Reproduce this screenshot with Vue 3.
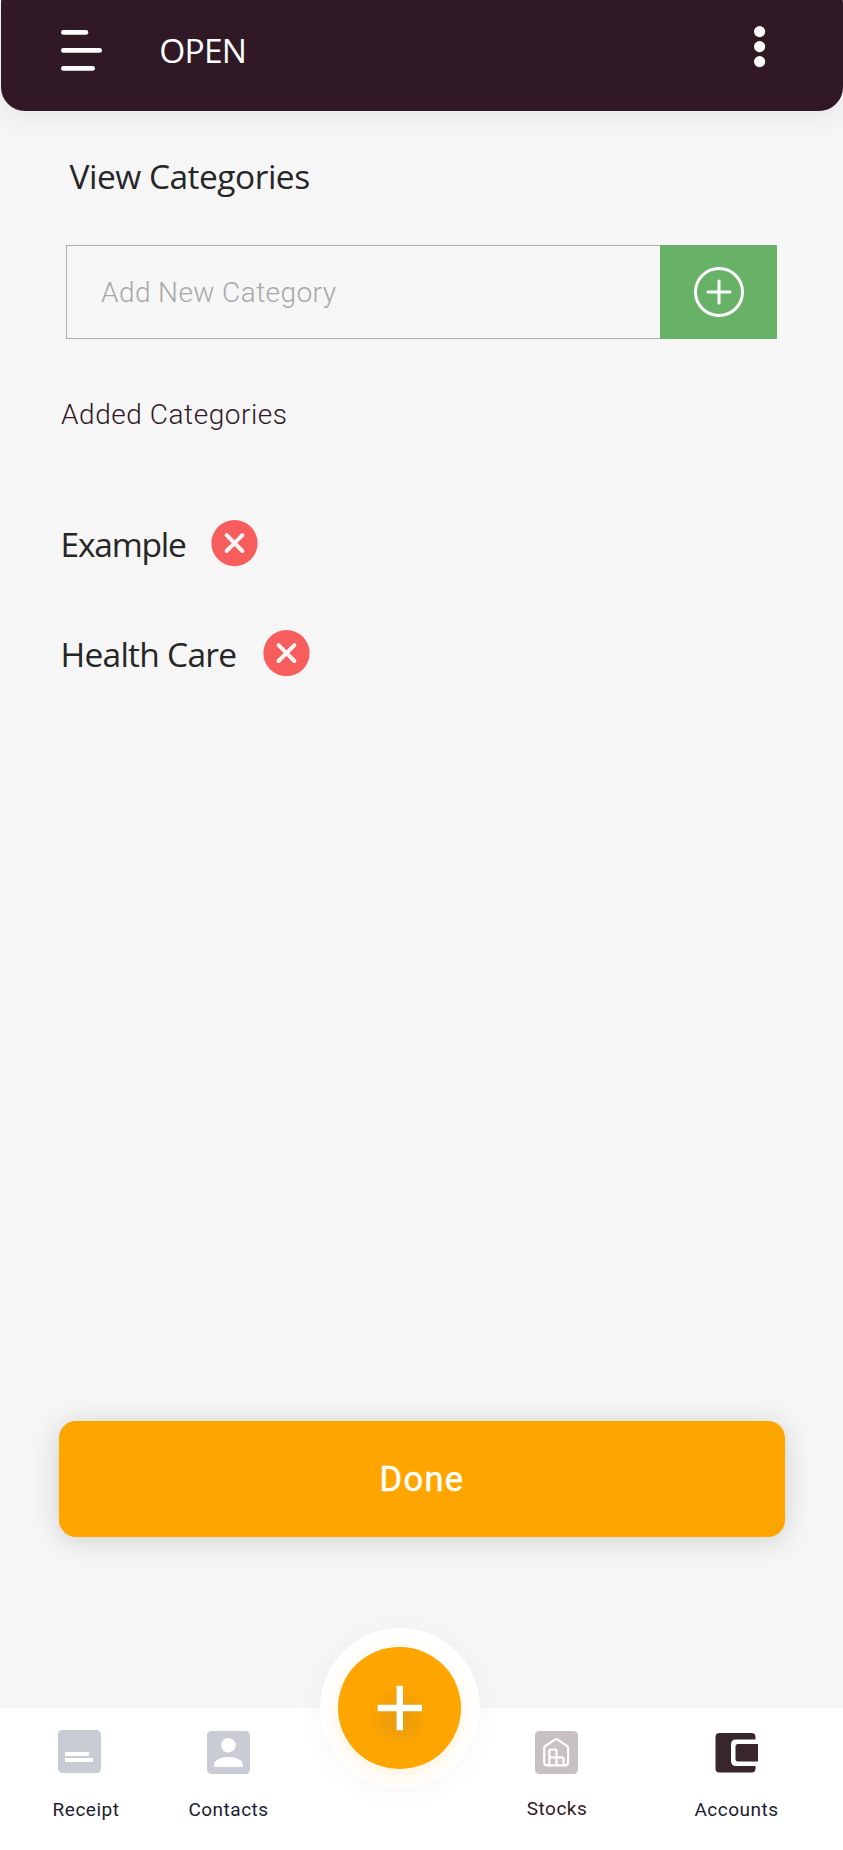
<script setup>
const categories = [
  { name: 'Example', key: 'example' },
  { name: 'Health Care', key: 'health' },
]
</script>

<template>
  <div class="screen">
    <header class="topbar">
      <svg class="menu" width="42" height="42" viewBox="0 0 42 42">
        <g fill="#fff">
          <rect x="0" y="0" width="27.3" height="4.8" rx="2.4" />
          <rect x="0" y="18" width="41" height="4.8" rx="2.4" />
          <rect x="0" y="36" width="34" height="4.8" rx="2.4" />
        </g>
      </svg>
      <span class="brand">OPEN</span>
      <svg class="more" width="12" height="42" viewBox="0 0 12 42" fill="#fff">
        <circle cx="5.6" cy="5.6" r="5.6" />
        <circle cx="5.6" cy="20.6" r="5.6" />
        <circle cx="5.6" cy="35.6" r="5.6" />
      </svg>
    </header>

    <main class="content">
      <h1 class="title"><span>View Categories</span></h1>
      <div class="field">
        <div class="entry"><span>Add New Category</span></div>
        <button class="add">
          <svg width="50" height="50" viewBox="0 0 50 50" fill="none" stroke="#fff">
            <circle cx="25" cy="25" r="23.5" stroke-width="3" />
            <path d="M14 25H36M25 14V36" stroke-width="3" stroke-linecap="round" />
          </svg>
        </button>
      </div>
      <h2 class="subtitle"><span>Added Categories</span></h2>
      <ul class="list">
        <li v-for="c in categories" :key="c.key" :class="c.key">
          <span class="name">{{ c.name }}</span>
          <svg width="47" height="47" viewBox="0 0 47 47">
            <circle cx="23.5" cy="23.1" r="23.1" fill="#f75d5d" />
            <path d="M15.6 15.2L31.4 31M31.4 15.2L15.6 31" stroke="#f8f5f5" stroke-width="4" stroke-linecap="round" />
          </svg>
        </li>
      </ul>
      <button class="done"><span>Done</span></button>
    </main>

    <nav class="tabs">
      <div class="tab receipt">
        <svg width="43" height="43" viewBox="0 0 43 43">
          <rect width="43" height="43" rx="4.5" fill="#c9ccd4" />
          <path d="M7 22h24v4H7zM7 28h28v4H7z" fill="#fff" />
        </svg>
        <span>Receipt</span>
      </div>
      <div class="tab contacts">
        <svg width="43" height="43" viewBox="0 0 43 43">
          <rect width="43" height="43" rx="4.5" fill="#c9ccd4" />
          <circle cx="21.4" cy="14.4" r="7.3" fill="#fff" />
          <path d="M7.2 36v-2.6C7.2 28.6 15 26 21.5 26s14.3 2.6 14.3 7.4V36z" fill="#fff" />
        </svg>
        <span>Contacts</span>
      </div>
      <div class="fab">
        <div class="disc">
          <svg width="46" height="46" viewBox="0 0 46 46">
            <path d="M.6 23H45M22.8 .8V45.2" stroke="#fff" stroke-width="6.4" />
          </svg>
        </div>
      </div>
      <div class="tab stocks">
        <svg width="43" height="43" viewBox="0 0 43 43">
          <rect width="43" height="43" rx="4.5" fill="#c8c1c4" />
          <g fill="none" stroke="#fff" stroke-width="2.2" stroke-linejoin="round">
            <path d="M9.2 17.2Q9.2 15.8 10.3 15L19.8 8.6Q21.2 7.7 22.6 8.6L32 15Q33.1 15.8 33.1 17.2V31.5Q33.1 34.3 30.3 34.3H12Q9.2 34.3 9.2 31.5Z" />
            <path d="M14.3 34V20Q14.3 18.5 15.8 18.5H20Q21.5 18.5 21.5 20V34M14.3 26.3H27Q28.5 26.3 28.5 27.8V34" />
          </g>
        </svg>
        <span>Stocks</span>
      </div>
      <div class="tab accounts">
        <svg width="43" height="43" viewBox="0 0 43 43">
          <path d="M4.5 2H36.5Q40.5 2 40.5 6V8.5H21Q16 8.5 16 13.5V30Q16 35 21 35H40.5V37.5Q40.5 41.5 36.5 41.5H4.5Q.5 41.5 .5 37.5V6Q.5 2 4.5 2Z" fill="#38252d" />
          <path d="M43 13H23Q20.5 13 20.5 15.5V28Q20.5 30.5 23 30.5H43Z" fill="#38252d" />
        </svg>
        <span>Accounts</span>
      </div>
    </nav>
  </div>
</template>

<style>
body {
  margin: 0;
  background: #f6f6f6;
}
</style>

<style scoped>
.screen {
  width: 843px;
  height: 1850px;
  display: flex;
  flex-direction: column;
  overflow: hidden;
  background: #f6f6f6;
  font-family: Roboto, "Liberation Sans", sans-serif;
}
.topbar {
  box-sizing: border-box;
  height: 131px;
  margin: -20px 0 0 0.6px;
  padding: 20px 77px 0 60.4px;
  display: flex;
  align-items: flex-start;
  flex: none;
  background: #301924;
  border-radius: 24px;
  box-shadow: 0 6px 28px rgba(0, 0, 0, 0.07);
}
.menu {
  margin-top: 30px;
}
.brand {
  margin: 29px 0 0 56.3px;
  font: 400 33.5px/42px "Open Sans", "Noto Sans", sans-serif;
  letter-spacing: -0.8px;
  color: #fff;
}
.more {
  margin: 26px 0 0 auto;
}
.content {
  flex: 1;
  display: flex;
  flex-direction: column;
}
.title {
  margin: 45px 0 0 69.5px;
  font: 400 33.5px/40px "Open Sans", "Noto Sans", sans-serif;
  letter-spacing: -0.5px;
  color: #262626;
}
.field {
  display: flex;
  height: 94px;
  margin: 49px 66px 0;
}
.entry {
  flex: 1;
  display: flex;
  align-items: center;
  padding-left: 34px;
  border: 1px solid #adadad;
  border-right: 0;
  font-size: 28px;
  font-weight: 300;
  letter-spacing: 0.42px;
  color: #a8a8a8;
}
.add {
  width: 117px;
  padding: 0;
  border: 0;
  display: flex;
  align-items: center;
  justify-content: center;
  background: #67b267;
}
.subtitle {
  margin: 56px 0 0 61px;
  font-size: 28px;
  line-height: 40px;
  font-weight: 300;
  letter-spacing: 0.55px;
  color: #301924;
}
.list {
  margin: 85px 0 0 60.5px;
  padding: 0;
  list-style: none;
}
.list li {
  display: flex;
  height: 47px;
  margin-bottom: 63px;
}
.name {
  font: 400 33.5px/49px "Open Sans", "Noto Sans", sans-serif;
  color: #262626;
}
.example .name {
  width: 150.3px;
  letter-spacing: -1.2px;
}
.health .name {
  width: 202.3px;
  letter-spacing: -0.74px;
}
.done {
  height: 116px;
  margin: auto 58px 171px 59px;
  padding: 0;
  border: 0;
  border-radius: 17px;
  background: #ffa500;
  box-shadow: 0 3px 28px rgba(0, 0, 0, 0.16);
  color: #fff;
  font: 400 34.5px/116px Roboto, sans-serif;
  letter-spacing: 1.3px;
  -webkit-text-stroke: 0.5px #fff;
}
.tabs {
  height: 142px;
  flex: none;
  display: grid;
  grid-template-columns: 172px 113px 229px 86px 243px;
  background: #fff;
}
.tab {
  display: flex;
  flex-direction: column;
  align-items: center;
  padding-top: 23px;
  font-size: 19px;
  font-weight: 400;
  line-height: 24px;
  letter-spacing: 0.5px;
  color: #1c1d31;
}
.tab span {
  margin-top: 24px;
}
.receipt {
  padding-top: 22px;
}
.receipt svg {
  margin-right: 13px;
}
.receipt span {
  margin-top: 25px;
}
.stocks {
  color: #301924;
}
.stocks svg {
  margin-right: 1px;
}
.stocks span {
  margin-top: 23px;
}
.accounts {
  padding-left: 30px;
}
.fab {
  width: 160px;
  height: 160px;
  margin: -80px auto 0;
  border-radius: 50%;
  display: flex;
  align-items: center;
  justify-content: center;
  background: #fff;
  box-shadow: 0 3px 28px rgba(0, 0, 0, 0.04);
}
.disc {
  width: 122.6px;
  height: 122.6px;
  border-radius: 50%;
  display: flex;
  align-items: center;
  justify-content: center;
  background: radial-gradient(circle at 50% 58%, #e69a10 0, #f09f09 15%, #ffa500 34%);
  box-shadow: 0 6px 20px rgba(255, 165, 0, 0.15);
}
</style>
